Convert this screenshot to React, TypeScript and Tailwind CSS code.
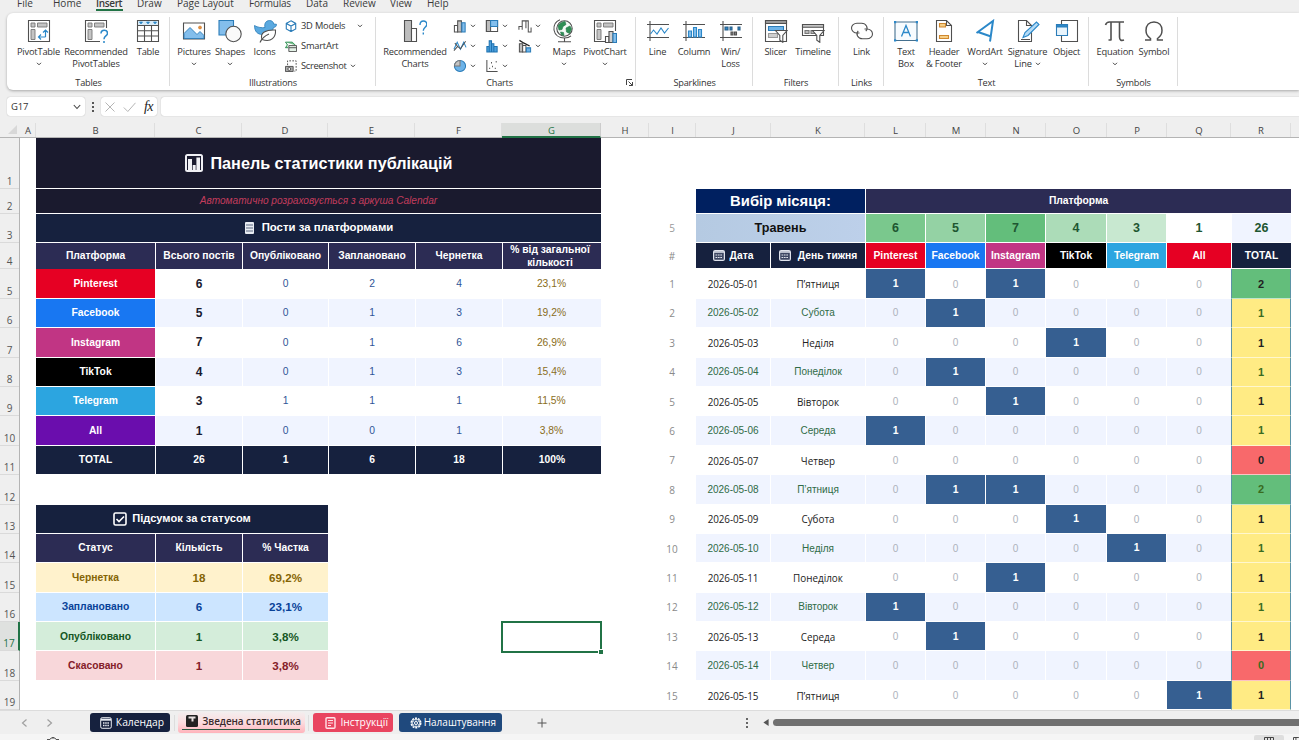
import type { ReactNode } from 'react'
import clsx from 'clsx'

const UI = "font-['Open_Sans','Noto_Sans',sans-serif]"
const ARIAL = "font-['Liberation_Sans',Arial,sans-serif]"

/* ---------- small helpers ---------- */

function Chevron({ className }: { className?: string }) {
  return (
    <svg viewBox="0 0 6 4" className={clsx('h-[4px] w-[6px] shrink-0', className)} fill="none" stroke="#444" strokeWidth="1">
      <path d="M1 .8 3 2.800 5 .8" />
    </svg>
  )
}

function Ico({ children, size = 'h-6 w-6', box = '0 0 24 24' }: { children: ReactNode; size?: string; box?: string }) {
  return (
    <svg viewBox={box} className={clsx('shrink-0', size)} fill="none" stroke="#505050" strokeWidth="1.1">
      {children}
    </svg>
  )
}

/* ---------- ribbon icons ---------- */

const pivotTable = (
  <Ico>
    <path d="M1.500 1.500h21v21h-21z" fill="#fff" />
    <path d="M4 4h4v4H4zM10.500 4h9.500v4h-9.500zM4 10.500h4v10H4z" fill="#c4c4c4" stroke="#777" strokeWidth=".9" />
    <path d="M18.500 18v-6.500M16 13.500l2.500-2.500 2.500 2.500M18.500 18h-6.500M14 15.500l-2.500 2.500 2.500 2.500" stroke="#2b88c9" strokeWidth="1.200" />
  </Ico>
)
const recPivot = (
  <Ico>
    <path d="M16 22.500H1.500v-21h21V9" fill="#fff" />
    <path d="M4 4h4v4H4zM10.500 4h9.500v4h-9.500zM4 10.500h4v10H4z" fill="#c4c4c4" stroke="#777" strokeWidth=".9" />
    <path d="M17 14.500c0-2 1.500-3.300 3.300-3.300s3.200 1.300 3.200 3c0 2.800-3.500 2.700-3.500 6M20 22v2" stroke="#2b88c9" strokeWidth="1.500" />
  </Ico>
)
const table = (
  <Ico>
    <path d="M1.500 1.500h21v21h-21z" fill="#fff" />
    <path d="M2 2h20v4.500H2z" fill="#d7ebf8" stroke="none" />
    <path d="M1.500 6.500h21M1.500 11.800h21M1.500 17h21M8.500 6.500v16M15.500 6.500v16" />
    <path d="M3.500 3h3L5 5zM10.500 3h3L12 5zM17.500 3h3L19 5z" fill="#2b88c9" stroke="#2b88c9" strokeWidth=".7" />
  </Ico>
)
const pictures = (
  <Ico>
    <path d="M1.500 4h21v16h-21z" fill="#fff" />
    <path d="M2 19.500v-5l6-6 7 7 3-3 4 4v3z" fill="#83beec" stroke="#2b7cb8" strokeWidth=".9" />
    <circle cx="18" cy="8.500" r="1.500" fill="#e8913a" stroke="#c8752b" strokeWidth=".6" />
  </Ico>
)
const shapes = (
  <Ico>
    <path d="M1 1.500h14.500V16H1z" fill="#83beec" stroke="#2b7cb8" />
    <circle cx="15.500" cy="15" r="7.700" fill="#fafafa" />
  </Ico>
)
const iconsIcon = (
  <Ico>
    <path d="M12 8.500c-1-4 1-7 4.500-7 2.500 0 4 1.500 4.200 3.500l2.800.3c0 2.500-1.500 3-3 3.200-.8 3-2 4.500-4 5.500l-7 1.500c-5 0-8-3-8-9 3 2 7.500 2.500 10.500 2z" fill="#5aa9e0" stroke="#2b7cb8" strokeWidth=".8" />
    <path d="M9 20.500c-2.500-7 4-10 13.500-9.500.5 7-4 13-13.500 9.500z" fill="#fff" />
    <path d="M7 23.500c1.500-3.500 4.500-6.500 9-8.500" />
  </Ico>
)
const recCharts = (
  <Ico>
    <path d="M1.500 1.500h7v21h-7z" fill="#bdbdbd" />
    <path d="M8.500 9.500h5v13h-5z" fill="#fff" />
    <path d="M17 6c0-2.500 1.500-4 3.500-4s3.500 1.500 3.300 3.600c-.2 2.700-3.500 3-3.500 6.200M20.300 13.500v2" stroke="#2b88c9" strokeWidth="1.400" />
  </Ico>
)
const maps = (
  <Ico>
    <circle cx="12.500" cy="9.500" r="7.700" fill="#f4faf6" />
    <path d="M6 7c2-3 4-4 7-4.500l1 3-3 2-1 3-3 .5zM14 9l4-2 1.500 3-2 4.500-3-1.500zM8.500 13l3 .5.500 3-2.500-.5z" fill="#2f8f55" stroke="#23784a" strokeWidth=".6" />
    <path d="M8 .8C3.500 2.500 1.500 6 2 11c.8 5 5 8 10.500 8 3 0 5-.8 6.500-2.200M12.500 19v3.500M6 22.800h13" />
  </Ico>
)
const pivotChart = (
  <Ico>
    <path d="M22.500 12V1.500h-21v21h11" fill="#fff" />
    <path d="M4 4h4v4H4zM10.500 4h9.500v4h-9.500zM4 10.500h4v10H4z" fill="#c4c4c4" stroke="#777" strokeWidth=".9" />
    <path d="M12.500 17.500h3.500v6h-3.500z" fill="#fff" />
    <path d="M16 12.500h4v11h-4z" fill="#d0d0d0" />
    <path d="M20 14.500h3.500v9H20z" fill="#83beec" stroke="#2b7cb8" />
  </Ico>
)
const sparkLine = (
  <Ico>
    <path d="M1 5.500h22M1 18.500h22M4 2v20" />
    <path d="m4.500 15 3-4 3.500 4 4-6 3.500 5 4-5" stroke="#2b88c9" />
  </Ico>
)
const sparkColumn = (
  <Ico>
    <path d="M1 5.500h22M1 18.500h22M4 2v20" />
    <path d="M6.500 12h3v6h-3zM11.500 8.500h3V18h-3zM16.500 10.500h3V18h-3z" fill="#83beec" stroke="#2b88c9" />
  </Ico>
)
const sparkWin = (
  <Ico>
    <path d="M1 5.500h22M1 18.500h22M4 2v20" />
    <path d="M6 8h3v3H6zM11 8h2v3h-2zM19 8h2v3h-2z" fill="#2b88c9" stroke="#2b5f88" />
    <path d="M12 13h2v3h-2zM15.500 13h2v3h-2z" fill="#888" />
  </Ico>
)
const funnel = <path d="M11.500 11.500h11.500l-4.200 5v6.800l-3-2v-4.800z" fill="#fff" />
const slicer = (
  <Ico>
    <path d="M1.500 1.500h21v21h-21z" fill="#fff" />
    <path d="M1.500 1.500h21v3h-21z" fill="#999" />
    <path d="M4.500 7.500h15v4h-15z" fill="#6db3e8" stroke="#2b7cb8" />
    <path d="M4.500 14.500h9v4h-9z" fill="#cfcfcf" stroke="#999" />
    {funnel}
  </Ico>
)
const timeline = (
  <Ico>
    <path d="M1.500 5.500h21v11h-21z" fill="#fff" />
    <path d="M1.500 5.500h21v2.700h-21z" fill="#c5c5c5" />
    <path d="M4 11.500h4v3H4zM10 11.500h4v3h-4z" fill="#bbb" stroke="#777" />
    {funnel}
  </Ico>
)
const link = (
  <Ico>
    <path d="M9.500 14H7A5.500 4.900 0 0 1 7 4.200h4.500a5.500 4.900 0 0 1 4.300 8" />
    <path d="M14.500 10H17a5.500 4.900 0 0 1 0 9.800h-4.500a5.500 4.900 0 0 1-4.300-8" />
  </Ico>
)
const textBox = (
  <Ico size="h-6 w-[26px]" box="0 0 26 24">
    <path d="M2 3h22v18.500H2z" fill="#f7fbfe" stroke="#44708f" />
    <path d="M1 2h2.200v2.200H1zM22.800 2H25v2.200h-2.200zM1 20.300h2.200v2.200H1zM22.800 20.300H25v2.200h-2.200z" fill="#2b88c9" stroke="none" />
    <path d="m8.500 17.500 4.500-11 4.500 11M10 13.500h6" stroke="#2b88c9" strokeWidth="1.300" />
  </Ico>
)
const headerFooter = (
  <Ico>
    <path d="M4.500 1.500h10l5 5v16h-15z" fill="#fff" />
    <path d="M14.500 1.500v5h5" />
    <path d="M7.500 4.500h6v3.500h-6zM7.500 16.500h9v3h-9z" fill="#f6cf87" stroke="#d0882e" />
  </Ico>
)
const wordArt = (
  <Ico>
    <path d="M3.500 14 20 2l-3 20.500M5 13l13 4.500" stroke="#2b88c9" strokeWidth="2" />
  </Ico>
)
const signature = (
  <Ico>
    <path d="M16 22.500H2.500v-21h8l5 5v16z" fill="#fff" />
    <path d="M10.500 1.500v5h5M5 20.500h9" />
    <path d="m7 18.500 2-5L20.500 3l2.500 2.500L12 16.500z" fill="#b5dbf6" stroke="#2b88c9" />
  </Ico>
)
const objectIcon = (
  <Ico>
    <path d="M6.500 1.500h16v21h-16z" fill="#fff" />
    <path d="M1.500 5.500h11v11h-11z" fill="#e8f4fc" stroke="#2b7cb8" />
    <path d="M1.500 5.500h11V8h-11z" fill="#2b88c9" stroke="#2b7cb8" />
  </Ico>
)
const equation = (
  <Ico>
    <path d="M2.500 6c.8-2.500 2-3 4-3H21M8 3v18.500M5.500 21h2.500M16.500 3v15c0 3 1.500 4 4.500 3" strokeWidth="1.600" />
  </Ico>
)
const symbol = (
  <Ico>
    <path d="M3 21h5.500v-1.500C5.500 17.500 4 15 4 11.500 4 6.500 7 3 12 3s8 3.500 8 8.500c0 3.500-1.500 6-4.500 8V21H21" strokeWidth="1.500" />
  </Ico>
)

/* ---------- ribbon ---------- */

interface BigButtonProps {
  icon: ReactNode
  label: string
  second?: string
  chevron?: boolean
  width: string
}

function BigButton({ icon, label, second, chevron, width }: BigButtonProps) {
  return (
    <div className={clsx('flex shrink-0 flex-col items-center pt-[6px]', width)}>
      {icon}
      <div className="mt-[3px] flex h-3 items-center whitespace-nowrap leading-3">{label}</div>
      <div className="flex h-3 items-center gap-[3px] whitespace-nowrap leading-3">
        {second}
        {chevron && <Chevron />}
      </div>
    </div>
  )
}

function Group({ name, width, labelPad, children }: { name: string; width: string; labelPad?: string; children: ReactNode }) {
  return (
    <div className={clsx('relative flex shrink-0 flex-col', width)}>
      <div className="flex h-[64px]">{children}</div>
      <div className={clsx('h-3 text-center text-[9.2px] leading-3 tracking-[-0.2px]', labelPad)}>{name}</div>
      <div className="absolute top-[4px] right-0 h-[69px] w-px bg-[#dcdcdc]" />
    </div>
  )
}

const miniCharts: ReactNode[] = [
  <><path d="M1 7h3.500v7H1z" fill="#fff" /><path d="M4.500 2h4v12h-4z" fill="#c4c4c4" /><path d="M9 4h3.500v10H9z" fill="#83beec" stroke="#2b7cb8" /></>,
  <><path d="M1 1.500h12v12H1z" fill="#fff" /><path d="M1 1.500h4.500v12H1z" fill="#bdbdbd" /><path d="M5.500 1.500H13V8H5.500z" fill="#83beec" stroke="#2b7cb8" /></>,
  <><path d="M.5 11.500V8h3.500v3.500M4 8V2h4v8M8 2h2.500v12h3V9" /></>,
  <><path d="M.5 11 4 3.500 7.500 11 11 3.500 13.500 9" stroke="#2b88c9" /><path d="m.5 12.500 4-4.500 3 2.500 5.500-8M1.500 4.500l3 3.500" /></>,
  <><path d="M1.500 8H4v6H1.500zM4 2h2.500v12H4zM6.500 5H9v9H6.500zM9 8h3.500v6H9z" fill="#4ba0dd" stroke="#1f72b0" /></>,
  <><path d="M1 5h3.500v9H1z" fill="#bdbdbd" /><path d="M4.500 7H8v7H4.500z" fill="#fff" /><path d="M8.500 9.500h4.500V14H8.500z" fill="#6db3e8" stroke="#2b7cb8" /><path d="m1 1.500 5 3 6 3" stroke="#222" strokeWidth="1.400" /></>,
  <><circle cx="7" cy="7.500" r="6" fill="#6db3e8" stroke="#2b7cb8" /><path d="M7 7.500v-6a6 6 0 0 0-6 6z" fill="#c4c4c4" stroke="#777" /></>,
  <><path d="M1.500 1v12.500H13" /><path d="M4 10h1M7 8h1M10 10h1M6 4h1M11 3h1" strokeWidth="1.500" /></>,
]

function Ribbon() {
  return (
    <div className="ml-[7px] flex h-[77px] overflow-hidden rounded-l-md bg-white text-[9.3px] tracking-[-0.2px] text-[#333] shadow-[0_1px_3px_rgba(0,0,0,0.3)]">
      <Group name="Tables" width="w-[163px]">
        <div className="w-[5px]" />
        <BigButton icon={pivotTable} label="PivotTable" chevron width="w-[53px]" />
        <BigButton icon={recPivot} label="Recommended" second="PivotTables" width="w-[62px]" />
        <BigButton icon={table} label="Table" width="w-[42px]" />
      </Group>
      <Group name="Illustrations" width="w-[206px]">
        <div className="w-[5px]" />
        <BigButton icon={pictures} label="Pictures" chevron width="w-[38px]" />
        <BigButton icon={shapes} label="Shapes" chevron width="w-[34px]" />
        <BigButton icon={iconsIcon} label="Icons" width="w-[35px]" />
        <div className="flex flex-col pt-[3px] pl-[3px]">
          <div className="flex h-5 items-center gap-1">
            <Ico size="h-3 w-3" box="0 0 14 14"><path d="M7 1 12.500 4v6.500L7 13.500l-5.500-3V4zM1.500 4 7 7l5.500-3M7 7v6.500" stroke="#2b7cb8" strokeWidth="1.300" /></Ico>
            3D Models
            <Chevron className="ml-[8px]" />
          </div>
          <div className="flex h-5 items-center gap-1">
            <Ico size="h-3 w-3" box="0 0 14 14"><path d="M.5 2.500h8L12 6M.5 2.500 3 5.500.5 9h3" fill="#7cc28f" stroke="#2f8f55" /><path d="M4.500 6.500h9v7h-9z" fill="#e3f2e7" /><path d="M4.500 9h9" /></Ico>
            SmartArt
          </div>
          <div className="flex h-5 items-center gap-1">
            <Ico size="h-3 w-3" box="0 0 14 14"><path d="M3 6V1h10v12h-2" strokeDasharray="2 1.500" /><path d="M.5 7.500h9v6h-9z" fill="#aaa" /><circle cx="5" cy="10.500" r="1.700" fill="#fff" /></Ico>
            <span className="tracking-[-0.3px]">Screenshot</span>
            <Chevron className="-ml-px" />
          </div>
        </div>
      </Group>
      <Group name="Charts" width="w-[260px]" labelPad="pr-[13px]">
        <div className="w-[5px]" />
        <BigButton icon={recCharts} label="Recommended" second="Charts" width="w-[68px]" />
        <div className="grid w-[100px] grid-cols-[32px_33px_32px] grid-rows-[20px_20px_20px] pt-[3px] pl-[4px]">
          {miniCharts.map((g, i) => (
            <div key={i} className="flex items-center gap-[3px]">
              <Ico size="h-[14px] w-[14px]" box="0 0 14 15">{g}</Ico>
              <Chevron />
            </div>
          ))}
        </div>
        <BigButton icon={maps} label="Maps" chevron width="w-[30px]" />
        <BigButton icon={pivotChart} label="PivotChart" chevron width="w-[52px]" />
        <svg viewBox="0 0 8 8" className="absolute right-[2px] bottom-[3px] h-2 w-2" fill="none" stroke="#444" strokeWidth="1">
          <path d="M.5 6V.5H6M2.500 2.500l4 4M6.500 3v3.500H3" />
        </svg>
      </Group>
      <Group name="Sparklines" width="w-[117px]">
        <div className="w-[5px]" />
        <BigButton icon={sparkLine} label="Line" width="w-[33px]" />
        <BigButton icon={sparkColumn} label="Column" width="w-[40px]" />
        <BigButton icon={sparkWin} label="Win/" second="Loss" width="w-[33px]" />
      </Group>
      <Group name="Filters" width="w-[86px]">
        <div className="w-[5px]" />
        <BigButton icon={slicer} label="Slicer" width="w-[35px]" />
        <BigButton icon={timeline} label="Timeline" width="w-[40px]" />
      </Group>
      <Group name="Links" width="w-[45px]">
        <div className="w-[4px]" />
        <BigButton icon={link} label="Link" width="w-[37px]" />
      </Group>
      <Group name="Text" width="w-[205px]">
        <div className="w-[3px]" />
        <BigButton icon={textBox} label="Text" second="Box" width="w-[38px]" />
        <BigButton icon={headerFooter} label="Header" second="& Footer" width="w-[38px]" />
        <BigButton icon={wordArt} label="WordArt" chevron width="w-[44px]" />
        <BigButton icon={signature} label="Signature" second="Line" chevron width="w-[41px]" />
        <BigButton icon={objectIcon} label="Object" width="w-[37px]" />
      </Group>
      <Group name="Symbols" width="w-[89px]">
        <div className="w-[4px]" />
        <BigButton icon={equation} label="Equation" chevron width="w-[44px]" />
        <BigButton icon={symbol} label="Symbol" width="w-[34px]" />
      </Group>
    </div>
  )
}

function MenuTabs() {
  return (
    <div className="relative flex h-[13px] items-start overflow-hidden">
      <div className="-mt-[4.5px] flex h-[15px] whitespace-nowrap text-[10px] leading-[15px] text-[#3a3a3a]">
        <span className="ml-[17px] w-[36px]">File</span>
        <span className="w-[43px]">Home</span>
        <span className="w-[41px] font-semibold tracking-[-0.35px]">Insert</span>
        <span className="w-[40px]">Draw</span>
        <span className="w-[72px]">Page Layout</span>
        <span className="w-[57px] tracking-[-0.2px]">Formulas</span>
        <span className="w-[37px]">Data</span>
        <span className="w-[47px]">Review</span>
        <span className="w-[37px]">View</span>
        <span>Help</span>
      </div>
      <div className="absolute top-[9px] left-[96px] h-[2px] w-[27px] bg-[#217346]" />
    </div>
  )
}

function FormulaBar() {
  return (
    <div className="mt-[7px] flex h-[19px] items-stretch pl-[7px]">
      <div className="flex w-[78px] items-center justify-between rounded-[3px] bg-white px-[4px] pt-px text-[9.5px] tracking-[-0.2px] text-[#333] shadow-[0_0_1px_rgba(0,0,0,0.35)]">
        G17
        <svg viewBox="0 0 8 6" className="h-[6px] w-[8px]" fill="none" stroke="#444" strokeWidth="1.1"><path d="m.8 1 3.200 3.500L7.200 1" /></svg>
      </div>
      <div className="ml-[6px] flex w-[3px] flex-col items-center justify-center gap-[2px]">
        {[0, 1, 2].map((i) => <span key={i} className="h-[2px] w-[2px] bg-[#555]" />)}
      </div>
      <div className="ml-[7px] flex w-[56px] items-center justify-between rounded-[3px] bg-white px-[4px] shadow-[0_0_1px_rgba(0,0,0,0.35)]">
        <svg viewBox="0 0 10 10" className="h-[10px] w-[10px]" stroke="#b5b5b5" strokeWidth="1"><path d="m.5.5 9 9M9.500.5l-9 9" /></svg>
        <svg viewBox="0 0 13 10" className="h-[10px] w-[13px]" fill="none" stroke="#b5b5b5" strokeWidth="1"><path d="m.8 5.500 4 4L12.500.8" /></svg>
        <span className="font-['Liberation_Serif',serif] text-[14px] leading-none tracking-[-0.5px] text-[#222] italic">fx</span>
      </div>
      <div className="ml-[4px] flex-1 rounded-l-[3px] bg-white shadow-[0_0_1px_rgba(0,0,0,0.35)]" />
    </div>
  )
}

/* ---------- sheet ---------- */

const columns = [
  ['A', 'w-[16px]'], ['B', 'w-[119px]'], ['C', 'w-[87px]'], ['D', 'w-[86px]'], ['E', 'w-[87px]'], ['F', 'w-[87px]'],
  ['G', 'w-[99px]'], ['H', 'w-[48px]'], ['I', 'w-[47px]'], ['J', 'w-[75px]'], ['K', 'w-[94px]'], ['L', 'w-[61px]'],
  ['M', 'w-[60px]'], ['N', 'w-[60px]'], ['O', 'w-[61px]'], ['P', 'w-[60px]'], ['Q', 'w-[64px]'], ['R', 'w-[60px]'],
]

const rowHeights = ['h-[51px]', 'h-[25px]', 'h-[29px]', 'h-[26.4px]']

function ColumnHeader() {
  return (
    <div className="mt-[7px] flex h-[15px] border-b border-[#b4b4b4] text-[9.5px] text-[#444]">
      <div className="flex w-5 items-end justify-end pr-[3px] pb-[3px]">
        <svg viewBox="0 0 10 10" className="h-[9px] w-[9px]"><path d="M10 0v10H0z" fill="#d8d8d8" /></svg>
      </div>
      {columns.map(([name, width]) => (
        <div
          key={name}
          className={clsx(
            'flex items-center justify-center border-r pl-px leading-none',
            width,
            name === 'G'
              ? 'relative z-10 -mb-px border-[#ccc] border-b-2 border-b-[#217346] bg-[#dcdedc] pt-[3px] text-[#217346]'
              : 'border-[#dedede] pt-[2px]'
          )}
        >
          {name}
        </div>
      ))}
    </div>
  )
}

function RowNumbers() {
  return (
    <div className="w-5 shrink-0 border-r border-[#b4b4b4] bg-[#efefef] text-[10px] text-[#555]">
      {Array.from({ length: 19 }, (_, i) => (
        <div
          key={i}
          className={clsx(
            'flex items-end justify-center border-b border-[#dadada] leading-[13px]',
            rowHeights[i] ?? 'h-[29.4px]',
            i === 16 && 'relative -mr-px border-r-2 border-r-[#217346] bg-[#dfe1df] text-[#217346]'
          )}
        >
          {i + 1}
        </div>
      ))}
    </div>
  )
}

function Cell({ className, children }: { className?: string; children?: ReactNode }) {
  return <div className={clsx('flex items-center justify-center border-b border-l border-white whitespace-nowrap', className)}>{children}</div>
}

const platforms = [
  { name: 'Pinterest', color: 'bg-[#e60023]', values: ['6', '0', '2', '4', '23,1%'] },
  { name: 'Facebook', color: 'bg-[#1877f2]', values: ['5', '0', '1', '3', '19,2%'] },
  { name: 'Instagram', color: 'bg-[#c13584]', values: ['7', '0', '1', '6', '26,9%'] },
  { name: 'TikTok', color: 'bg-black', values: ['4', '0', '1', '3', '15,4%'] },
  { name: 'Telegram', color: 'bg-[#2ca5e0]', values: ['3', '1', '1', '1', '11,5%'] },
  { name: 'All', color: 'bg-[#6a0dad]', values: ['1', '0', '0', '1', '3,8%'] },
]

const statuses = [
  { name: 'Чернетка', count: '18', share: '69,2%', color: 'bg-[#fff2cc] text-[#856404]' },
  { name: 'Заплановано', count: '6', share: '23,1%', color: 'bg-[#cce5ff] text-[#084298]' },
  { name: 'Опубліковано', count: '1', share: '3,8%', color: 'bg-[#d4edda] text-[#155724]' },
  { name: 'Скасовано', count: '1', share: '3,8%', color: 'bg-[#f8d7da] text-[#842029]' },
]

const LEFT_GRID = 'grid grid-cols-[120px_87px_86px_87px_87px_99px]'

function Statistics() {
  return (
    <div className="w-[566px] shrink-0 text-[10.3px]">
      <Cell className="h-[51px] gap-[7px] bg-[#1a1a2e] pl-px text-[16.2px] font-bold text-white">
        <svg viewBox="0 0 18 18" className="h-[18px] w-[18px]">
          <rect width="18" height="18" rx="2.500" fill="#f0f0f4" />
          <path d="M2 2h14v14H2z" fill="#1a1a2e" />
          <path d="M3 5h4v11.500H3zM7.700 11h3v5.500h-3zM11.400 3.500h3.600v13h-3.600z" fill="#f0f0f4" />
        </svg>
        Панель статистики публікацій
      </Cell>
      <Cell className="h-[25px] bg-[#1a1a2e] text-[10.1px] text-[#c23c5c] italic">Автоматично розраховується з аркуша Calendar</Cell>
      <Cell className="h-[29px] gap-[8px] bg-[#16213e] pl-px text-[11.4px] font-bold text-white">
        <svg viewBox="0 0 9 12" className="h-3 w-[9px]">
          <rect width="9" height="12" rx="1" fill="#e8ecf2" />
          <path d="M1 3h7M1 6h7M1 9h7" stroke="#5d6880" />
        </svg>
        Пости за платформами
      </Cell>
      <div className={clsx(LEFT_GRID, 'h-[26.4px] font-bold text-white')}>
        {['Платформа', 'Всього постів', 'Опубліковано', 'Заплановано', 'Чернетка'].map((t) => (
          <Cell key={t} className="bg-[#2c2c54]">{t}</Cell>
        ))}
        <Cell className="bg-[#2c2c54] pr-[4px] text-center leading-[13px]">% від загальної<br />кількості</Cell>
      </div>
      {platforms.map((p, i) => (
        <div key={p.name} className={clsx(LEFT_GRID, 'h-[29.4px]')}>
          <Cell className={clsx('font-bold text-white', p.color)}>{p.name}</Cell>
          {p.values.map((v, c) => (
            <Cell
              key={c}
              className={clsx(
                i % 2 === 1 && 'bg-[#f0f4ff]',
                c === 0 && 'text-[12px] font-bold text-[#1a1a2e]',
                c > 0 && c < 4 && 'text-[#2f5597]',
                c === 4 && 'pr-px text-[#8a6d1b]'
              )}
            >
              {v}
            </Cell>
          ))}
        </div>
      ))}
      <div className={clsx(LEFT_GRID, 'h-[29.4px] font-bold text-white')}>
        {['TOTAL', '26', '1', '6', '18', '100%'].map((t) => <Cell key={t} className="bg-[#16213e]">{t}</Cell>)}
      </div>

      <div className="mt-[29.4px] w-[293px] font-bold">
        <Cell className="h-[29.4px] gap-[5px] bg-[#16213e] text-[11.1px] text-white">
          <svg viewBox="0 0 14 14" className="h-[14px] w-[14px]" fill="none" stroke="#fff" strokeWidth="1.600">
            <rect x="1" y="1" width="12" height="12" rx="1.500" />
            <path d="m3.500 7 2.500 2.500 5-5" />
          </svg>
          Підсумок за статусом
        </Cell>
        <div className="grid h-[29.4px] grid-cols-[120px_87px_86px] text-white">
          {['Статус', 'Кількість', '% Частка'].map((t) => <Cell key={t} className="bg-[#2c2c54]">{t}</Cell>)}
        </div>
        {statuses.map((s) => (
          <div key={s.name} className="grid h-[29.4px] grid-cols-[120px_87px_86px]">
            <Cell className={s.color}>{s.name}</Cell>
            <Cell className={clsx('text-[11.6px]', s.color)}>{s.count}</Cell>
            <Cell className={clsx('text-[11.6px]', s.color)}>{s.share}</Cell>
          </div>
        ))}
      </div>
    </div>
  )
}

const weekDays = ['П’ятниця', 'Субота', 'Неділя', 'Понеділок', 'Вівторок', 'Середа', 'Четвер']

// platform columns with a post, for every day of the month shown
const posts = [[0, 2], [1], [3], [1], [2], [0], [], [1, 2], [3], [4], [2], [0], [1], [], [5]]

const totalColor: Record<number, string> = { 0: 'bg-[#f8696b]', 1: 'bg-[#ffeb84]', 2: 'bg-[#63be7b]' }

const MONTH_GRID = 'grid grid-cols-[47px_75px_95px_60px_60px_60px_61px_60px_65px_60px]'

function CalendarIcon() {
  return (
    <svg viewBox="0 0 12 11" className="h-[11px] w-[12px]" fill="none">
      <rect x=".6" y=".6" width="10.800" height="9.800" rx="1.500" fill="#3d4763" stroke="#dfe3ec" strokeWidth="1.200" />
      <path d="M1 2h10" stroke="#dfe3ec" strokeWidth="1.500" />
      <path d="M2.500 5h7M2.500 7.500h7" stroke="#dfe3ec" strokeWidth="1.200" strokeDasharray="1.700 .7" />
    </svg>
  )
}

function MonthTable() {
  return (
    <div className="w-[643px] shrink-0 pt-[51px] text-[10.3px]">
      <div className="grid h-[25px] grid-cols-[47px_170px_426px] font-bold text-white">
        <span />
        <Cell className="bg-[#002060] text-[14.8px]">Вибір місяця:</Cell>
        <Cell className="bg-[#2c2c54]">Платформа</Cell>
      </div>
      <div className="grid h-[29px] grid-cols-[47px_170px_60px_60px_60px_61px_60px_65px_60px] text-[12.5px] font-bold text-[#1e5631]">
        <Cell className={clsx('pt-px text-[10px] font-normal text-[#999]', UI)}>5</Cell>
        <Cell className="bg-linear-to-r from-[#b5cae2] to-[#bdd0ea] text-[12.6px] text-[#111]">Травень</Cell>
        <Cell className="bg-[#7ac88d]">6</Cell>
        <Cell className="bg-[#94d2a4]">5</Cell>
        <Cell className="bg-[#63be7b]">7</Cell>
        <Cell className="bg-[#acdcb8]">4</Cell>
        <Cell className="bg-[#c8e8d0]">3</Cell>
        <Cell>1</Cell>
        <Cell className="bg-[#f0f4ff]">26</Cell>
      </div>
      <div className={clsx(MONTH_GRID, 'h-[26.4px] font-bold text-white')}>
        <Cell className={clsx('pt-px text-[10px] font-normal text-[#888]', UI)}>#</Cell>
        <Cell className="gap-[5px] bg-[#16213e]"><CalendarIcon />Дата</Cell>
        <Cell className="gap-[7px] bg-[#16213e]"><CalendarIcon />День тижня</Cell>
        {platforms.map((p) => (
          <Cell key={p.name} className={p.name === 'All' ? 'bg-[#e60023]' : p.color}>{p.name}</Cell>
        ))}
        <Cell className="bg-[#16213e]">TOTAL</Cell>
      </div>
      {posts.map((hits, i) => {
        const even = i % 2 === 1
        const stripe = even && 'bg-[#f0f4ff]'
        const text = even ? 'text-[10px] text-[#2f6b46]' : clsx('pt-[2px] text-[9.9px] text-[#222]', UI)
        return (
          <div key={i} className={clsx(MONTH_GRID, 'h-[29.4px]')}>
            <Cell className={clsx('pt-[2px] text-[10px] text-[#8a8a8a]', UI)}>{i + 1}</Cell>
            <Cell className={clsx(stripe, text, !even && 'tracking-[-0.1px]')}>2026-05-{String(i + 1).padStart(2, '0')}</Cell>
            <Cell className={clsx(stripe, text)}>{weekDays[i % 7]}</Cell>
            {platforms.map((p, c) =>
              hits.includes(c) ? (
                <Cell key={p.name} className={clsx('bg-[#365f91] font-bold text-white', !even && 'pt-px')}>1</Cell>
              ) : (
                <Cell key={p.name} className={clsx('text-[10px] text-[#adb2bb]', stripe, !even && 'pt-px')}>0</Cell>
              )
            )}
            <div
              className={clsx(
                'flex items-center justify-center border-x border-b border-x-[#5b93a5] border-b-white/60 text-[11px] font-bold',
                totalColor[hits.length],
                even ? 'text-[#3a6b1f]' : 'pt-px text-[#222]'
              )}
            >
              {hits.length}
            </div>
          </div>
        )
      })}
    </div>
  )
}

function Sheet() {
  return (
    <div className="flex h-[572px] overflow-hidden bg-white">
      <RowNumbers />
      <div className={clsx('relative flex pl-[15px]', ARIAL)}>
        <Statistics />
        <div className="w-[47px] shrink-0" />
        <MonthTable />
        <div className="absolute top-[483px] left-[481px] h-[32px] w-[101px] border-2 border-[#217346]">
          <div className="absolute -right-[3px] -bottom-[3px] h-[5px] w-[5px] border-t border-l border-white bg-[#217346]" />
        </div>
      </div>
    </div>
  )
}

/* ---------- bottom bars ---------- */

function SheetTabs() {
  return (
    <div className="flex h-6 items-center border-t border-[#dcdcdc] bg-[#efefef] text-[10.3px] text-white">
      <svg viewBox="0 0 34 10" className="ml-[20px] h-[10px] w-[34px]" fill="none" stroke="#a0a0a0" strokeWidth="1.200">
        <path d="M6.500 1.500 2.500 5l4 3.500M27.500 1.500l4 3.500-4 3.500" />
      </svg>
      <div className="ml-[36px] flex h-[19px] w-[80px] items-center justify-end gap-[4px] rounded-[3px] bg-[#16213e] pr-[6px]">
        <svg viewBox="0 0 12 12" className="h-3 w-3" fill="none" stroke="#e8ecf2">
          <rect x=".7" y=".7" width="10.600" height="10.600" rx="1.500" />
          <path d="M1 2.700h10" strokeWidth="2" />
          <path d="M3 6h6M3 8.500h6" strokeDasharray="1.500 .7" strokeWidth="1.300" />
        </svg>
        Календар
      </div>
      <div className="ml-[4px] h-4 w-px bg-[#ddd]" />
      <div className="relative ml-[3px] flex h-[21px] w-[127px] items-center justify-end gap-[4px] rounded-[3px] bg-linear-to-b from-[#f3eeee] via-[#fbdcdf] to-[#ffb3bb] pr-[4px] pb-[3px] text-[9.9px] font-semibold tracking-[-0.05px] text-[#3a2a2c]">
        <svg viewBox="0 0 12 12" className="h-3 w-3">
          <rect width="12" height="12" rx="1.500" fill="#222" />
          <path d="M2.500 1.500h7v2h-2v3h-2v-3h-3z" fill="#e8e0e0" />
        </svg>
        Зведена статистика
        <div className="absolute right-[5px] bottom-[3px] left-[4px] h-px bg-[#2a5a40]" />
      </div>
      <div className="ml-[3px] h-4 w-px bg-[#ddd]" />
      <div className="ml-[4px] flex h-[19px] w-[80px] items-center justify-end gap-[4px] rounded-[3px] bg-[#e94560] pr-[5px]">
        <svg viewBox="0 0 11 12" className="h-3 w-[11px]" fill="none" stroke="#ffe3e8">
          <rect x="1" y=".7" width="9" height="10.600" rx="1" strokeWidth="1.400" />
          <path d="M3 3.500h5M3 6h5M3 8.500h3" strokeWidth="1.200" />
        </svg>
        Інструкції
      </div>
      <div className="ml-[6px] flex h-[19px] w-[103px] items-center justify-end gap-[2px] rounded-[3px] bg-[#1f497d] pr-[6px] text-[10px]">
        <svg viewBox="0 0 12 12" className="h-3 w-3" fill="none" stroke="#fff">
          <circle cx="6" cy="6" r="4.800" strokeWidth="1.400" strokeDasharray="2 1" />
          <circle cx="6" cy="6" r="3.800" strokeWidth=".8" />
          <circle cx="6" cy="6" r="1.500" />
          <path d="M6 1v3.500M6 7.500V11M1.500 3.500l3 1.700M7.500 7l3 1.700M1.500 8.700l3-1.700M7.500 5l3-1.700" strokeWidth=".6" />
        </svg>
        Налаштування
      </div>
      <svg viewBox="0 0 10 10" className="ml-[35px] h-[10px] w-[10px]" stroke="#555"><path d="M5 .5v9M.5 5h9" /></svg>
      <div className="ml-[199px] flex w-[2px] flex-col gap-[2px]">
        {[0, 1, 2].map((i) => <span key={i} className="h-[2px] w-[2px] bg-[#666]" />)}
      </div>
      <svg viewBox="0 0 6 8" className="ml-[15px] h-[7px] w-[6px]"><path d="M6 0v8L0 4z" fill="#555" /></svg>
      <div className="ml-[4px] h-[7px] flex-1 rounded-l-full bg-[#707070]" />
    </div>
  )
}

function StatusBar() {
  return (
    <div className="flex h-[6px] items-end justify-between overflow-hidden bg-[#f5f5f5] pl-[47px]">
      <svg viewBox="0 0 12 3" className="h-[3px] w-3" fill="none" stroke="#555"><path d="M0 2.500h3l1-1.500h4l1 1.500h3M5 .5h2" /></svg>
      <div className="flex h-[5px] w-[45px] items-end">
        <div className="flex h-[5px] w-[31px] items-end justify-center rounded-t-[2px] bg-[#dedede]">
          <svg viewBox="0 0 10 3" className="h-[3px] w-[10px]" fill="none" stroke="#444"><path d="M.5 3V.5h9V3M3.500.5V3M6.500.5V3" /></svg>
        </div>
        <svg viewBox="0 0 6 3" className="ml-[9px] h-[3px] w-[6px]" fill="none" stroke="#444"><path d="M.5 3V.5H6M3 .5V3" /></svg>
      </div>
    </div>
  )
}

export default function App() {
  return (
    <div className={clsx('h-[740px] w-[1299px] overflow-hidden bg-[#efefef]', UI)}>
      <MenuTabs />
      <Ribbon />
      <FormulaBar />
      <ColumnHeader />
      <Sheet />
      <SheetTabs />
      <StatusBar />
    </div>
  )
}
